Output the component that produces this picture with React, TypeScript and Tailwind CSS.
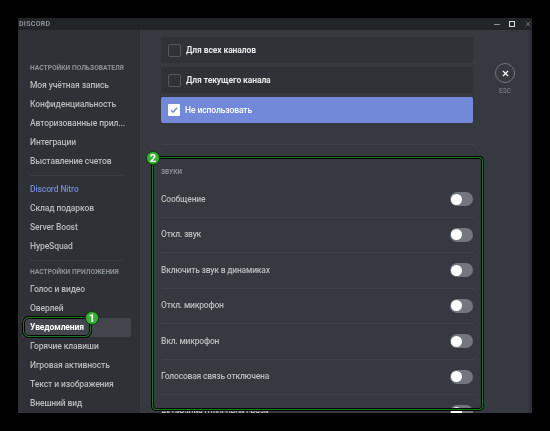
import { X } from "lucide-react";

const font = { fontFamily: 'Roboto, "Noto Sans", sans-serif' };

const userItems = ["Моя учётная запись", "Конфиденциальность", "Авторизованные прил...", "Интеграции", "Выставление счетов"];
const nitroItems = ["Склад подарков", "Server Boost", "HypeSquad"];
const appItems = ["Голос и видео", "Оверлей", "Уведомления", "Горячие клавиши", "Игровая активность", "Текст и изображения", "Внешний вид"];
const soundRows = [
  "Сообщение",
  "Откл. звук",
  "Включить звук в динамиках",
  "Откл. микрофон",
  "Вкл. микрофон",
  "Голосовая связь отключена",
  "Активация голосовой связи",
];

function NavItem({ label }: { label: string }) {
  const active = label === "Уведомления";
  return (
    <div
      className={
        active
          ? "flex h-[19px] items-center rounded-[2px] bg-[#42454c] pl-[8px] text-[8.5px] font-bold tracking-[-0.1px] whitespace-nowrap text-white"
          : "flex h-[19px] items-center pl-[8px] text-[8.5px] font-medium tracking-[-0.1px] whitespace-nowrap text-[#b9bbbe]"
      }
    >
      {label}
    </div>
  );
}

function Badge({ n }: { n: number }) {
  return (
    <span className="flex h-[14px] w-[14px] items-center justify-center rounded-full border border-[#0c3f0e] bg-[#3cb034] text-[11px] leading-none font-bold text-white">
      {n}
    </span>
  );
}

function Toggle() {
  return (
    <span className="flex h-[14px] w-[23px] items-center rounded-full bg-[#72767d] pl-[1px]">
      <span className="h-[11px] w-[11px] rounded-full bg-white" />
    </span>
  );
}

function ChannelOption({ label, checked }: { label: string; checked?: boolean }) {
  return (
    <div
      className={
        checked
          ? "flex h-[26px] items-center gap-[5px] rounded-[2px] bg-[#7289da] pl-[7px] text-[8.5px] font-medium tracking-[-0.1px] text-white"
          : "flex h-[26px] items-center gap-[5px] rounded-[2px] bg-[#303237] pl-[7px] text-[8.5px] font-bold tracking-[-0.1px] text-[#e4e5e7]"
      }
    >
      {checked ? (
        <span className="flex h-[12px] w-[12px] items-center justify-center rounded-[1px] bg-white">
          <svg viewBox="0 0 12 12" className="h-[10px] w-[10px]" fill="none" stroke="#7289da" strokeWidth="1.8">
            <path d="M2.5 6.2 5 8.6 9.5 3.4" />
          </svg>
        </span>
      ) : (
        <span className="h-[13px] w-[13px] rounded-[2px] border border-[#55585e]" />
      )}
      {label}
    </div>
  );
}

export default function App() {
  return (
    <div className="h-[431px] w-[550px] overflow-hidden bg-black pt-[18px] pl-[18px]" style={font}>
      <div className="relative flex h-[395px] w-[514px] flex-col overflow-hidden bg-[#36393f] blur-[0.3px]">
        <div className="flex h-[12px] shrink-0 items-center justify-between bg-[#232427] pl-[1px]">
          <span className="text-[7px] font-bold tracking-[0.3px] text-[#8e9297]">DISCORD</span>
          <div className="flex items-center gap-[9px] text-[#b9bbbe]">
            <span className="h-px w-[6px] bg-[#8e9297]" />
            <span className="h-[6px] w-[6px] border border-[#dcddde]" />
            <X size={8} strokeWidth={1.5} />
          </div>
        </div>

        <div className="flex min-h-0 flex-1">
          <aside className="w-[122px] shrink-0 overflow-hidden bg-[#2f3136] pt-[30px] pl-[4px]">
            <div className="w-[109px]">
              <div className="flex h-[16px] items-center pl-[8px] text-[6.7px] font-bold whitespace-nowrap text-[#8e9297]">НАСТРОЙКИ ПОЛЬЗОВАТЕЛЯ</div>
              {userItems.map((item) => (
                <NavItem key={item} label={item} />
              ))}
              <div className="mx-[8px] mt-[4px] mb-[4px] h-px bg-[#393c42]" />
              <div className="flex h-[19px] items-center pl-[8px] text-[8.5px] font-medium tracking-[-0.1px] text-[#7289da]">Discord Nitro</div>
              {nitroItems.map((item) => (
                <NavItem key={item} label={item} />
              ))}
              <div className="mx-[8px] mt-[4px] mb-[4px] h-px bg-[#393c42]" />
              <div className="flex h-[15px] items-center pl-[8px] text-[6.7px] font-bold whitespace-nowrap text-[#8e9297]">НАСТРОЙКИ ПРИЛОЖЕНИЯ</div>
              {appItems.map((item) => (
                <NavItem key={item} label={item} />
              ))}
            </div>
          </aside>

          <main className="flex min-w-0 flex-1 overflow-hidden border-r-[3px] border-[#2f3136]">
            <div className="w-[333px] shrink-0 pt-[7px] pl-[21px]">
              <div className="flex flex-col gap-[4px]">
                <ChannelOption label="Для всех каналов" />
                <ChannelOption label="Для текущего канала" />
                <ChannelOption label="Не использовать" checked />
              </div>
              <div className="mt-[21px] h-px bg-[#40434a]" />
              <div className="mt-[23px] flex h-[10px] items-center text-[6.5px] font-bold text-[#8e9297]">ЗВУКИ</div>
              <div className="mt-[4px]">
                {soundRows.map((row) => (
                  <div key={row} className="flex h-[35.5px] items-center justify-between border-b border-[#40434a] text-[8.5px] font-medium tracking-[-0.2px] whitespace-nowrap text-[#b9bbbe]">
                    {row}
                    <Toggle />
                  </div>
                ))}
              </div>
            </div>
            <div className="flex flex-1 flex-col items-center pt-[33px] pl-[8px]">
              <span className="flex h-[20px] w-[20px] shrink-0 items-center justify-center rounded-full border border-[#72767d] text-white">
                <X size={9} strokeWidth={3} />
              </span>
              <span className="mt-[4px] text-[6.5px] font-semibold text-[#72767d]">ESC</span>
            </div>
          </main>
        </div>

        <div className="absolute top-[299px] left-[5px] h-[20px] w-[68px] rounded-[6px] border border-[#177a1a] shadow-[0_0_0_1px_#000,inset_0_0_0_1px_#000]">
          <div className="absolute -top-[7px] left-[61px]">
            <Badge n={1} />
          </div>
        </div>
        <div className="absolute top-[139px] left-[134px] h-[253px] w-[331px] rounded-[4px] border border-[#177a1a] shadow-[0_0_0_1px_#000,inset_0_0_0_1px_#000]">
          <div className="absolute -top-[7px] -left-[7px]">
            <Badge n={2} />
          </div>
        </div>
      </div>
    </div>
  );
}
